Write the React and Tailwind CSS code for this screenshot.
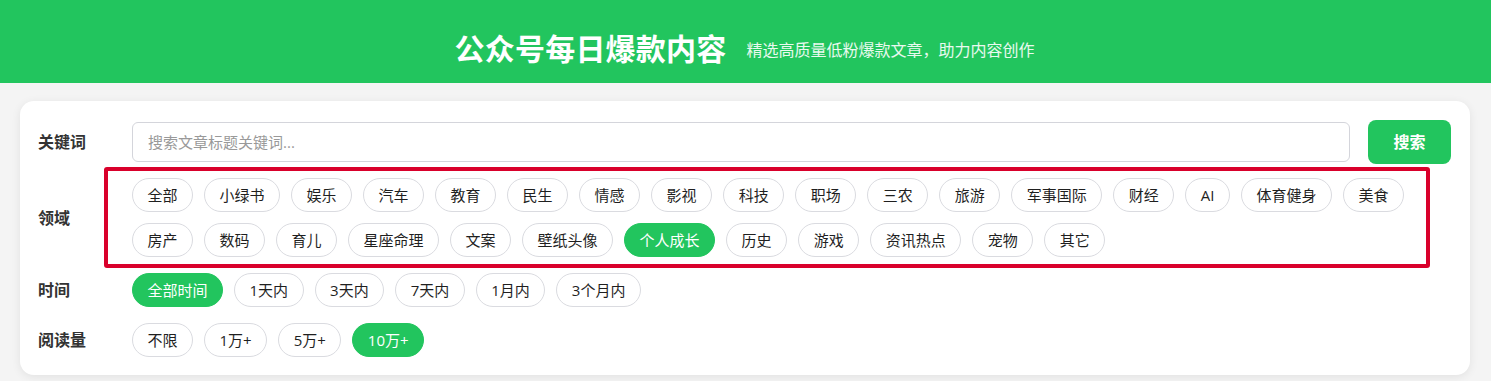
import React from 'react';

const DOMAINS = [
  '全部', '小绿书', '娱乐', '汽车', '教育', '民生', '情感', '影视', '科技', '职场', '三农', '旅游',
  '军事国际', '财经', 'AI', '体育健身', '美食', '房产', '数码', '育儿', '星座命理', '文案', '壁纸头像',
  '个人成长', '历史', '游戏', '资讯热点', '宠物', '其它',
];
const TIMES = ['全部时间', '1天内', '3天内', '7天内', '1月内', '3个月内'];
const READS = ['不限', '1万+', '5万+', '10万+'];

const Tag = ({ label, active }) => (
  <button
    className={`h-[34px] px-[14.5px] rounded-full border text-[15px] leading-[20px] whitespace-nowrap ${
      active ? 'bg-[#22c55e] border-[#22c55e] text-white' : 'bg-white border-[#dadbe0] text-[#1f1f1f]'
    }`}
  >
    {label}
  </button>
);

const Label = ({ children }) => (
  <div className="w-[94px] shrink-0 text-[16px] font-semibold text-[#333]">{children}</div>
);

export default function App() {
  return (
    <div
      className="min-h-[381px] bg-[#f4f4f4]"
      style={{ fontFamily: '"Open Sans", "Noto Sans CJK SC", sans-serif' }}
    >
      <header className="h-[83px] bg-[#22c55e] flex items-start justify-center pt-[31px]">
        <div className="flex items-center gap-[20px] pr-[2px]">
          <h1 className="text-[30px] leading-[36px] font-bold text-white tracking-[0.2px]">公众号每日爆款内容</h1>
          <p className="text-[16px] leading-[24px] text-white/90 mt-[2px]">精选高质量低粉爆款文章，助力内容创作</p>
        </div>
      </header>

      <div className="ml-5 mr-[21px] mt-[18px] bg-white rounded-[14px] shadow-[0_2px_10px_rgba(0,0,0,0.08)] pl-[18px] pr-[19px] pt-[19px] pb-[18px]">
        <div className="flex items-center h-[44px]">
          <Label>关键词</Label>
          <input
            placeholder="搜索文章标题关键词..."
            className="flex-1 h-[40px] rounded-md border border-[#d4d5db] px-[15px] text-[15px] placeholder:text-[#999] outline-none"
          />
          <button className="ml-[18px] w-[83px] h-[44px] rounded-lg bg-[#22c55e] text-white text-[16px] font-bold">
            搜索
          </button>
        </div>

        <div className="relative flex items-center mt-[14px]">
          <Label>领域</Label>
          <div className="flex flex-wrap gap-x-[11px] gap-y-[11px]">
            {DOMAINS.map((d) => (
              <Tag key={d} label={d} active={d === '个人成长'} />
            ))}
          </div>
          <div className="pointer-events-none absolute left-[66px] top-[-11px] w-[1326px] h-[101px] border-[4px] border-[#d9002b] rounded-[3px]" />
        </div>

        <div className="flex items-center mt-[16px]">
          <Label>时间</Label>
          <div className="flex gap-[11px]">
            {TIMES.map((t) => (
              <Tag key={t} label={t} active={t === '全部时间'} />
            ))}
          </div>
        </div>

        <div className="flex items-center mt-[16px]">
          <Label>阅读量</Label>
          <div className="flex gap-[11px]">
            {READS.map((r) => (
              <Tag key={r} label={r} active={r === '10万+'} />
            ))}
          </div>
        </div>
      </div>
    </div>
  );
}
